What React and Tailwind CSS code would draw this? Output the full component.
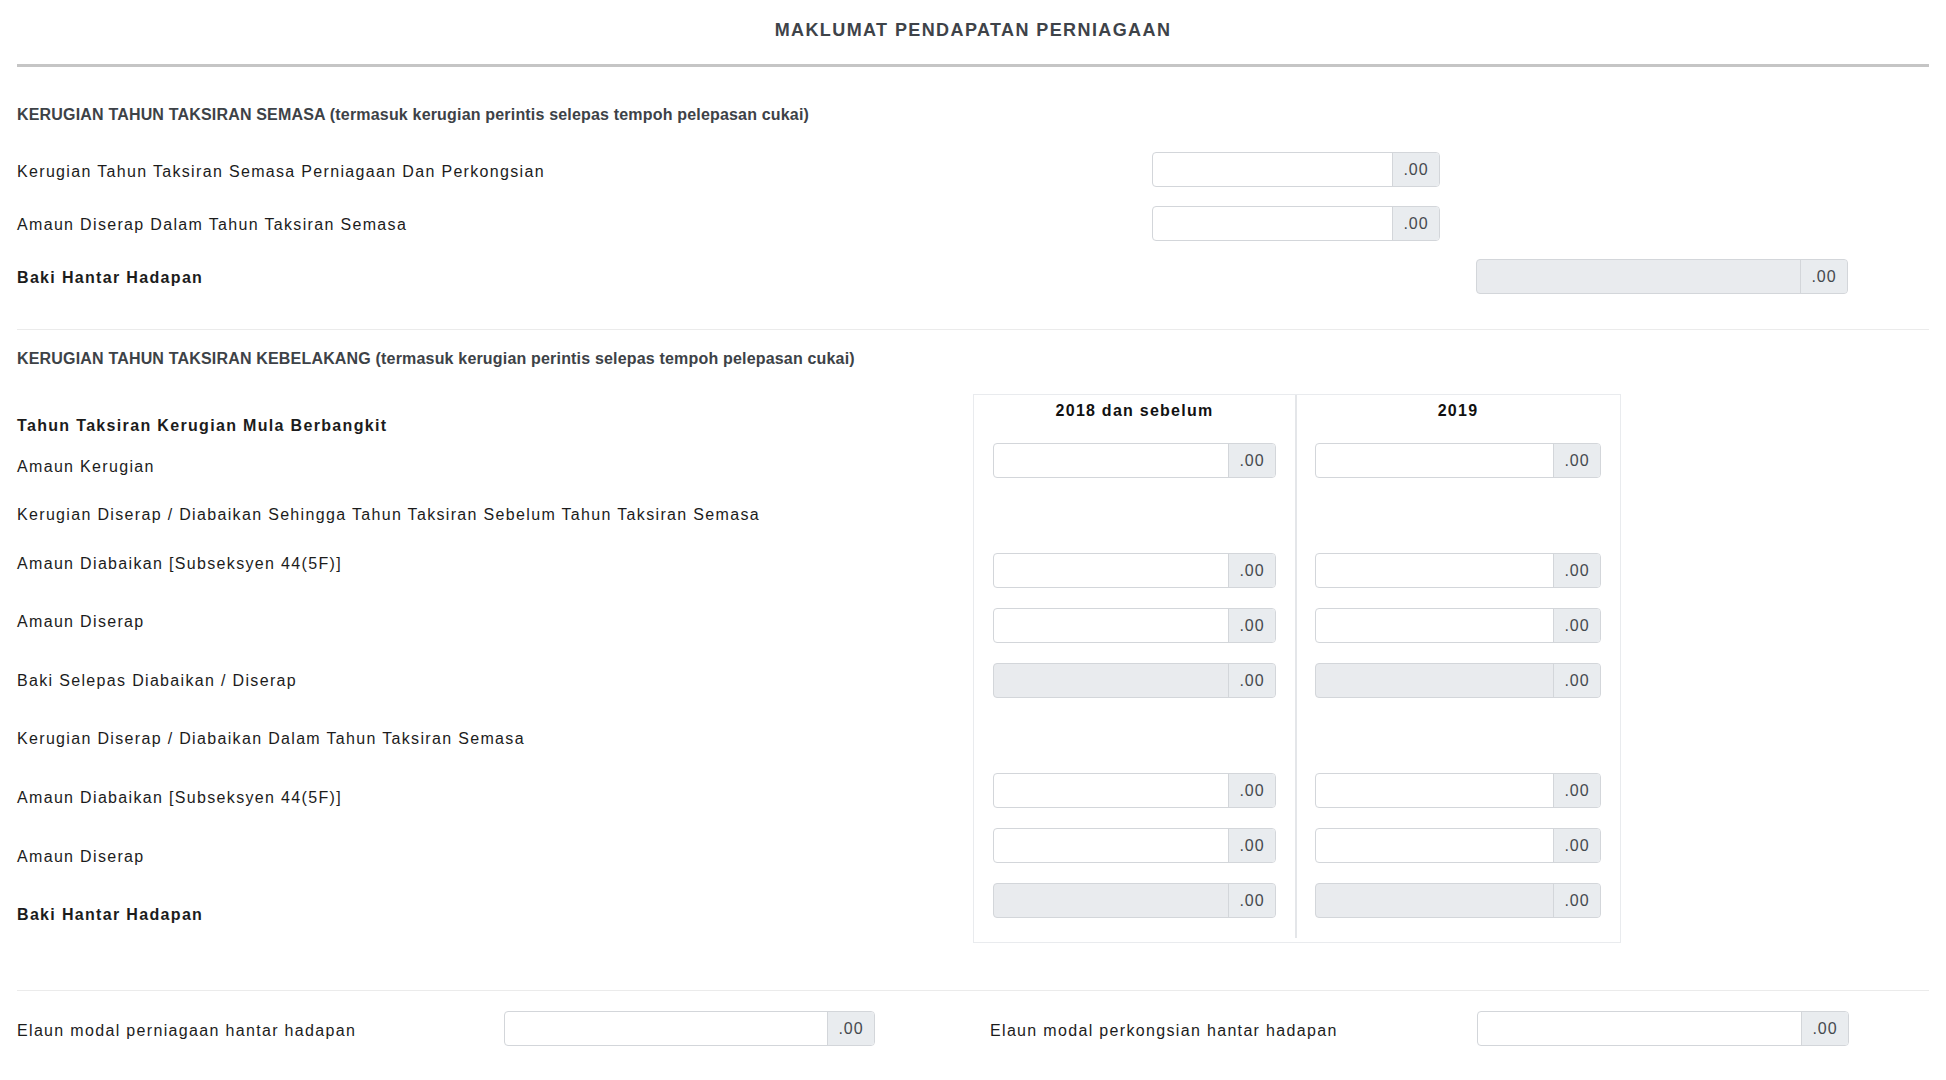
const font = "font-['Liberation_Sans',Arial,sans-serif]";

function MoneyInput({ disabled = false, addon = "w-[47px]" }) {
  return (
    <div
      className={`flex h-[35px] w-full overflow-hidden rounded-[4px] border border-[#d3d6da] ${
        disabled ? "bg-[#e9ebee]" : "bg-white"
      }`}
    >
      <input
        type="text"
        disabled={disabled}
        className="min-w-0 flex-1 bg-transparent px-3 outline-none"
      />
      <div
        className={`${addon} flex shrink-0 items-center justify-center border-l border-[#d3d6da] bg-[#e9ecef] text-[16px] tracking-[1px] text-[#45494e]`}
      >
        .00
      </div>
    </div>
  );
}

function Label({ children, bold = false, className = "" }) {
  return (
    <div
      className={`text-[16px] leading-[24px] tracking-[1.33px] text-[#1c1c1c] ${
        bold ? "font-bold" : ""
      } ${className}`}
    >
      {children}
    </div>
  );
}

function SectionHeading({ children, className = "" }) {
  return (
    <div
      className={`text-[16px] font-bold leading-[24px] tracking-[0.18px] text-[#3d4247] ${className}`}
    >
      {children}
    </div>
  );
}

// rows of the two year columns: "input" | "disabled" | null (empty line)
const yearRows = [
  "input",
  null,
  "input",
  "input",
  "disabled",
  null,
  "input",
  "input",
  "disabled",
];

const leftLabels = [
  { text: "Tahun Taksiran Kerugian Mula Berbangkit", bold: true, mt: "mt-[20px]" },
  { text: "Amaun Kerugian", mt: "mt-[17px]" },
  { text: "Kerugian Diserap / Diabaikan Sehingga Tahun Taksiran Sebelum Tahun Taksiran Semasa", mt: "mt-[24px]" },
  { text: "Amaun Diabaikan [Subseksyen 44(5F)]", mt: "mt-[25px]" },
  { text: "Amaun Diserap", mt: "mt-[34px]" },
  { text: "Baki Selepas Diabaikan / Diserap", mt: "mt-[35px]" },
  { text: "Kerugian Diserap / Diabaikan Dalam Tahun Taksiran Semasa", mt: "mt-[34px]" },
  { text: "Amaun Diabaikan [Subseksyen 44(5F)]", mt: "mt-[35px]" },
  { text: "Amaun Diserap", mt: "mt-[35px]" },
  { text: "Baki Hantar Hadapan", bold: true, mt: "mt-[34px]" },
];

function YearColumn({ title, className = "" }) {
  return (
    <div className={`flex flex-col px-[19px] ${className}`}>
      <div className="mb-[16px] flex h-[32px] items-center justify-center text-[16px] font-bold tracking-[1.25px] text-[#111]">
        {title}
      </div>
      {yearRows.map((row, i) => (
        <div key={i} className="h-[55px]">
          {row && <MoneyInput disabled={row === "disabled"} />}
        </div>
      ))}
    </div>
  );
}

export default function App() {
  return (
    <div className={`${font} min-h-screen bg-white px-[17px]`}>
      {/* Title */}
      <div className="flex h-[67px] justify-center border-b-[3px] border-[#c5c5c5] pt-[18px] text-[18px] font-bold leading-[24px] tracking-[1.4px] text-[#3e4349]">
        MAKLUMAT PENDAPATAN PERNIAGAAN
      </div>

      {/* Current year losses */}
      <SectionHeading className="mt-[36px]">
        KERUGIAN TAHUN TAKSIRAN SEMASA (termasuk kerugian perintis selepas tempoh pelepasan cukai)
      </SectionHeading>

      <div className="mt-[25px] flex h-[35px] items-center">
        <Label className="mt-[4px] w-[1135px]">
          Kerugian Tahun Taksiran Semasa Perniagaan Dan Perkongsian
        </Label>
        <div className="w-[288px]">
          <MoneyInput />
        </div>
      </div>
      <div className="mt-[19px] flex h-[35px] items-center">
        <Label className="mt-[2px] w-[1135px]">
          Amaun Diserap Dalam Tahun Taksiran Semasa
        </Label>
        <div className="w-[288px]">
          <MoneyInput />
        </div>
      </div>
      <div className="mt-[18px] flex h-[35px] items-center">
        <Label bold className="mt-[2px] w-[1459px]">
          Baki Hantar Hadapan
        </Label>
        <div className="w-[372px]">
          <MoneyInput disabled />
        </div>
      </div>

      <div className="mt-[35px] border-t border-[#ebebeb]" />

      {/* Previous years losses */}
      <SectionHeading className="mt-[17px]">
        KERUGIAN TAHUN TAKSIRAN KEBELAKANG (termasuk kerugian perintis selepas tempoh pelepasan cukai)
      </SectionHeading>

      <div className="mt-[23px] flex">
        <div className="flex w-[956px] flex-col">
          {leftLabels.map((l, i) => (
            <Label key={i} bold={l.bold} className={l.mt}>
              {l.text}
            </Label>
          ))}
        </div>
        <div className="flex self-start border border-[#e9ebee] pb-[4px]">
          <YearColumn
            title="2018 dan sebelum"
            className="w-[323px] border-r-2 border-[#e4e6e9]"
          />
          <YearColumn title="2019" className="w-[323px] pl-[18px]" />
        </div>
      </div>

      <div className="mt-[47px] border-t border-[#ebebeb]" />

      {/* Capital allowances */}
      <div className="mt-[20px] grid grid-cols-2">
        <div className="flex h-[35px] items-center">
          <Label className="mt-[4px] w-[487px]">
            Elaun modal perniagaan hantar hadapan
          </Label>
          <div className="w-[371px]">
            <MoneyInput />
          </div>
        </div>
        <div className="flex h-[35px] items-center pl-[17px]">
          <Label className="mt-[4px] w-[487px]">
            Elaun modal perkongsian hantar hadapan
          </Label>
          <div className="w-[372px]">
            <MoneyInput />
          </div>
        </div>
      </div>
    </div>
  );
}
